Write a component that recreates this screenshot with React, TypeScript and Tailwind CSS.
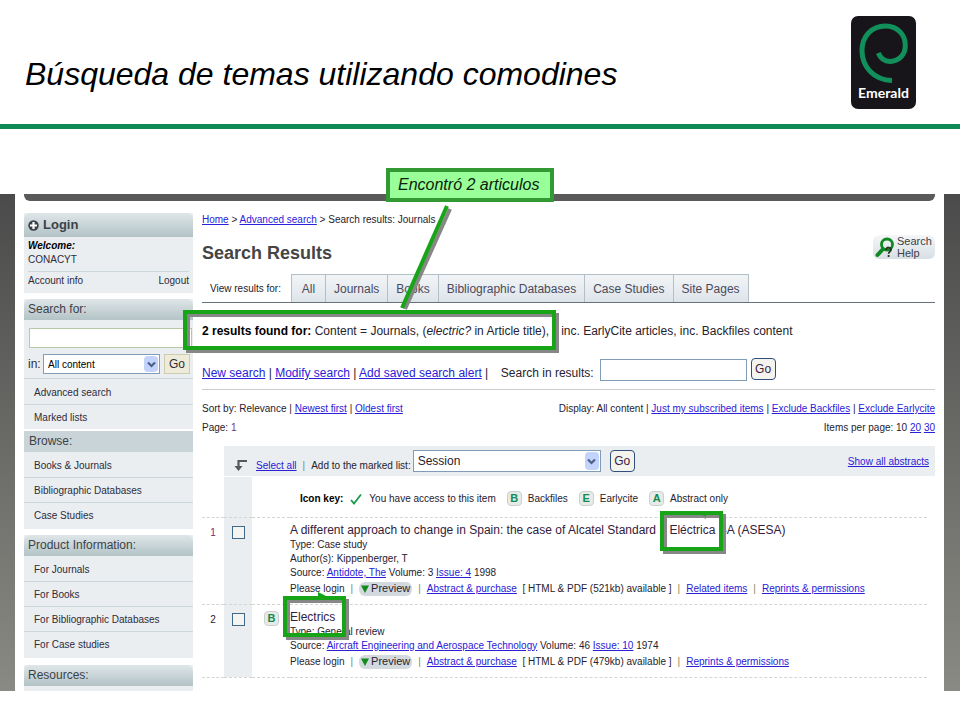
import { ReactNode } from "react";

const Link = ({ children }: { children: ReactNode }) => (
  <a href="#" className="text-[#2a20d8] underline">{children}</a>
);

const Bar = () => <span className="px-1.5 text-[#7c8a5c]">|</span>;

const Chevron = ({ className }: { className: string }) => (
  <span className={`absolute pointer-events-none flex items-center justify-center rounded-sm bg-[#c3d3fb] ${className}`}>
    <svg width="9" height="7" viewBox="0 0 9 7" fill="none">
      <path d="M1 1.5l3.500 3.500 3.500-3.500" stroke="#4a5f8a" strokeWidth="2.200" />
    </svg>
  </span>
);

const Badge = ({ children }: { children: ReactNode }) => (
  <span className="inline-flex h-[15px] w-[15px] items-center justify-center rounded-sm border border-[#cbd0cf] bg-[#e6ebea] text-[11px] leading-none font-bold text-[#148a4c]">
    {children}
  </span>
);

const Logo = () => (
  <svg width="65" height="93" viewBox="0 0 65 93" role="img" aria-label="Emerald">
    <rect x="0" y="0" width="65" height="93" rx="7" fill="#17151a" />
    <path
      d="M27.300 37C30 43.500 35 46 41 45.300C49 44.300 54.300 38 54.300 29.500C54.300 18 46 10 34.500 10C20.500 10 11 20.500 11 34.500C11 51 23 64 41 64.600"
      fill="none"
      stroke="#12905c"
      strokeWidth="5"
    />
    <text x="32.500" y="82" textAnchor="middle" fontFamily="Lato, sans-serif" fontSize="14" fontWeight="700" fill="#fff">Emerald</text>
  </svg>
);

const headStyle = "rounded-t-md bg-linear-to-b from-[#dfe6e8] to-[#b3c3c6] text-[#3c4148]";

const MenuList = ({ items }: { items: string[] }) => (
  <ul>
    {items.map((item, index) => (
      <li key={item} className={`h-[25px] pl-2.5 text-[10px] ${index > 0 ? "border-t border-[#cdd6da] leading-[26px]" : "leading-[28px]"}`}>
        <a href="#">{item}</a>
      </li>
    ))}
  </ul>
);

const Sidebar = () => (
  <aside className="w-[169px] shrink-0 pt-3 text-[#2e2b3a]">
    <section className="mb-1.5 bg-[#eaeef1]">
      <h2 className={`flex h-6 items-center gap-1 px-1 text-[13px] font-bold ${headStyle}`}>
        <svg width="11" height="11" viewBox="0 0 11 11">
          <circle cx="5.500" cy="5.500" r="5.200" fill="#3c4148" />
          <path d="M5.500 2v7M2 5.500h7" stroke="#fff" strokeWidth="2.200" />
        </svg>
        Login
      </h2>
      <div className="h-14 px-1 pt-0.5 text-[10px] leading-[14px]">
        <p className="font-bold italic text-black">Welcome:</p>
        <p>CONACYT</p>
        <div className="mt-1 flex justify-between border-t border-[#cdd6da] pt-0.5">
          <a href="#">Account info</a>
          <a href="#">Logout</a>
        </div>
      </div>
    </section>
    <section className="mb-0.5 bg-[#eaeef1]">
      <h2 className={`h-[21px] px-1 text-[12px] leading-[21px] ${headStyle}`}>Search for:</h2>
      <form className="pt-2 pb-1">
        <input aria-label="Search for" type="text" className="ml-[5px] block h-5 w-[163px] border border-[#b7c9a4] bg-white px-1 text-[10px]" />
        <div className="mt-1.5 flex items-center pl-1 text-[12px]">
          <label htmlFor="scope" className="w-3.5">in:</label>
          <div className="relative ml-px">
            <select id="scope" className="block h-5 w-[117px] appearance-none border border-[#7f9db9] bg-white pl-1 text-[10px] text-black">
              <option>All content</option>
            </select>
            <Chevron className="top-0.5 right-0.5 h-4 w-3.5" />
          </div>
          <button type="button" className="ml-1 h-5 w-[26px] border border-[#cfcdb0] bg-[#eeecd8] text-[12px] leading-none">Go</button>
        </div>
      </form>
      <div className="border-t border-[#cdd6da]">
        <MenuList items={["Advanced search", "Marked lists"]} />
      </div>
    </section>
    <section className="mb-1.5 bg-[#eaeef1] pb-0.5">
      <h2 className="h-[21px] bg-[#c9d4d9] px-[5px] text-[12px] leading-[21px] text-[#3c4148]">Browse:</h2>
      <MenuList items={["Books & Journals", "Bibliographic Databases", "Case Studies"]} />
    </section>
    <section className="mb-[7px] bg-[#eaeef1] pb-0.5">
      <h2 className={`h-[21px] px-1 text-[12px] leading-[21px] ${headStyle}`}>Product Information:</h2>
      <MenuList items={["For Journals", "For Books", "For Bibliographic Databases", "For Case studies"]} />
    </section>
    <section className="bg-[#eaeef1] pb-[5px]">
      <h2 className={`h-[21px] px-1 text-[12px] leading-[21px] ${headStyle}`}>Resources:</h2>
    </section>
  </aside>
);

const tabs = ["All", "Journals", "Books", "Bibliographic Databases", "Case Studies", "Site Pages"];

type Article = {
  id: number;
  backfile: boolean;
  title: ReactNode;
  lines: string[];
  source: string;
  volume: string;
  issue: string;
  year: string;
  size: string;
  links: string[];
};

const articles: Article[] = [
  {
    id: 1,
    backfile: false,
    title: <>A different approach to change in Spain: the case of Alcatel Standard <span className="pl-2.5">Eléctrica</span> SA (ASESA)</>,
    lines: ["Type: Case study", "Author(s): Kippenberger, T"],
    source: "Antidote, The",
    volume: "3",
    issue: "Issue: 4",
    year: "1998",
    size: "521kb",
    links: ["Related items", "Reprints & permissions"],
  },
  {
    id: 2,
    backfile: true,
    title: "Electrics",
    lines: ["Type: General review"],
    source: "Aircraft Engineering and Aerospace Technology",
    volume: "46",
    issue: "Issue: 10",
    year: "1974",
    size: "479kb",
    links: ["Reprints & permissions"],
  },
];

const GoButton = () => (
  <button type="button" className="h-[22px] w-[25px] rounded-sm border border-[#2f4f7c] bg-[#f4f3ee] text-[12px] leading-none text-[#3a2140]">Go</button>
);

const ArticleRow = ({ article }: { article: Article }) => (
  <tr className="border-b border-dashed border-[#d3d7d3] align-top">
    <td className={`w-[22px] pt-2 text-center leading-[14px] ${article.backfile ? "" : "text-[#7a2a7a]"}`}>{article.id}</td>
    <td className="w-7 bg-[#eaeef1] pt-2">
      <input
        type="checkbox"
        aria-label={`Select article ${article.id}`}
        className="mx-auto block h-[13px] w-[13px] appearance-none border border-[#3f6a8a] bg-[#f4f4f1]"
      />
    </td>
    <td className="w-[38px] pt-1.5 pl-3">{article.backfile && <Badge>B</Badge>}</td>
    <td className="pt-1 pb-1.5 leading-[14px]">
      <h3 className="text-[12px] leading-4 text-[#33203c]">{article.title}</h3>
      {article.lines.map((line) => (
        <p key={line}>{line}</p>
      ))}
      <p>
        Source: <Link>{article.source}</Link> Volume: {article.volume} <Link>{article.issue}</Link> {article.year}
      </p>
      <div className="flex h-[18px] items-center whitespace-pre">
        Please login<Bar />
        <button type="button" className="flex h-3.5 items-center gap-0.5 rounded-md bg-[#d3dadf] px-0.5 text-[11px] leading-none">
          <svg width="8" height="8" viewBox="0 0 8 8">
            <path d="M0 0.500h8l-4 7.500z" fill="#148a1c" />
          </svg>
          Preview
        </button>
        <Bar /><Link>Abstract & purchase</Link>
        {`  [ HTML & PDF (${article.size}) available ]`}
        {article.links.map((link) => (
          <span key={link}><Bar /><Link>{link}</Link></span>
        ))}
      </div>
    </td>
  </tr>
);

const Results = () => (
  <main className="min-w-0 flex-1 pt-3 text-[10px] text-[#26222e]">
    <nav className="leading-[14px]">
      <Link>Home</Link> &gt; <Link>Advanced search</Link> &gt; Search results: Journals
    </nav>
    <div className="mt-2 flex items-start justify-between">
      <h1 className="pt-1.5 text-[18px] leading-6 font-bold text-[#454545]">Search Results</h1>
      <a href="#" className="flex h-6 w-[62px] items-center gap-0.5 rounded-md bg-linear-to-b from-[#f4f6f8] to-[#d8dfe4] pl-0.5 text-[11px] text-[#3c4148]">
        <svg width="20" height="21" viewBox="0 0 20 21" fill="none" className="shrink-0">
          <circle cx="12" cy="7.500" r="5.500" stroke="#0f8a22" strokeWidth="2.800" />
          <path d="M8 12l-5.500 6" stroke="#0f8a22" strokeWidth="4" strokeLinecap="round" />
          <path d="M11 13c0-3.500 5-3 5-.3c0 2-2.400 1.800-2.400 4M13.600 18v2" stroke="#223322" strokeWidth="1.800" />
        </svg>
        <span className="flex flex-col leading-3">
          <span>Search</span>
          <span>Help</span>
        </span>
      </a>
    </div>
    <div className="mt-[9px] flex h-[29px] items-stretch border-b border-[#66717c]">
      <span className="w-[89px] pl-2 leading-[30px]">View results for:</span>
      <div className="flex border-l border-[#b3bfc6]">
        {tabs.map((tab) => (
          <button key={tab} type="button" className="min-w-[34px] border-t border-r border-[#b3bfc6] bg-linear-to-b from-[#f2f5f7] to-[#dde4e9] px-2 text-[12px] text-[#4a4a5c]">
            {tab}
          </button>
        ))}
      </div>
    </div>
    <p className="mt-5 text-[12px] leading-4 whitespace-nowrap">
      <b className="text-black">2 results found for:</b> Content = Journals, (<i>electric?</i> in Article title),
      <span className="pl-3">inc. EarlyCite articles, inc. Backfiles content</span>
    </p>
    <form className="mt-[19px] flex h-8 items-start border-b border-[#c9cdd0] text-[12px] whitespace-pre">
      <span className="leading-[30px]">
        <Link>New search</Link> | <Link>Modify search</Link> | <Link>Add saved search alert</Link> |{"  "}
      </span>
      <label htmlFor="within" className="mx-1.5 leading-[30px]">Search in results:</label>
      <input id="within" type="text" className="mr-1 mt-px h-[22px] w-[147px] border border-[#7f9db9] bg-white px-1" />
      <GoButton />
    </form>
    <div className="mt-3 flex justify-between leading-[14px]">
      <p>Sort by: Relevance | <Link>Newest first</Link> | <Link>Oldest first</Link></p>
      <p>
        Display: All content | <Link>Just my subscribed items</Link> | <Link>Exclude Backfiles</Link> | <Link>Exclude Earlycite</Link>
      </p>
    </div>
    <div className="mt-[5px] flex justify-between leading-[14px]">
      <p>Page: <span className="text-[#7a2a7a]">1</span></p>
      <p>Items per page: 10 <Link>20</Link> <Link>30</Link></p>
    </div>
    <div className="mt-[11px] ml-[22px] flex h-[30px] items-center bg-[#eaeef1] pr-1.5 pl-2.5">
      <svg width="14" height="13" viewBox="0 0 14 13" fill="none" className="mt-2 mr-2">
        <path d="M13 2H4.500v6" stroke="#55585c" strokeWidth="2.200" />
        <path d="M0.500 7h8l-4 5z" fill="#55585c" />
      </svg>
      <span className="mt-2"><Link>Select all</Link></span>
      <span className="mt-2"><Bar /></span>
      <label htmlFor="marked" className="mt-2">Add to the marked list:</label>
      <div className="relative ml-0.5">
        <select id="marked" className="block h-[22px] w-[188px] appearance-none border border-[#7f9db9] bg-white pl-1 text-[12px]">
          <option>Session</option>
        </select>
        <Chevron className="top-0.5 right-0.5 h-[18px] w-3.5" />
      </div>
      <span className="ml-[9px]"><GoButton /></span>
      <span className="ml-auto"><Link>Show all abstracts</Link></span>
    </div>
    <div className="mt-px mr-2">
      <table className="w-full border-collapse">
        <tbody>
          <tr className="h-10 border-b border-dashed border-[#d3d7d3]">
            <td></td>
            <td className="bg-[#eaeef1]"></td>
            <td></td>
            <td className="pt-1">
              <div className="flex items-center gap-[7px] pl-2.5">
                <b className="text-black">Icon key:</b>
                <svg width="12" height="12" viewBox="0 0 12 12" fill="none">
                  <path d="M1 7l3 3.500L11 1.500" stroke="#1c9a4c" strokeWidth="1.800" />
                </svg>
                You have access to this item
                <span className="ml-1 flex items-center gap-1.5"><Badge>B</Badge> Backfiles</span>
                <span className="ml-1 flex items-center gap-1.5"><Badge>E</Badge> Earlycite</span>
                <span className="ml-1 flex items-center gap-1.5"><Badge>A</Badge> Abstract only</span>
              </div>
            </td>
          </tr>
          {articles.map((article) => (
            <ArticleRow key={article.id} article={article} />
          ))}
        </tbody>
      </table>
    </div>
  </main>
);

// green frames drawn over the results, with a hard grey shadow on both edges
const Frame = ({ className }: { className: string }) => (
  <div className={`pointer-events-none absolute border-4 border-[#17a517] shadow-[3px_3px_0_#878787,inset_3px_3px_0_#878787] ${className}`} />
);

const App = () => {
  return (
    <div className="min-h-screen bg-white font-['Liberation_Sans',Arial,sans-serif]">
      <header className="flex h-[129px] items-start justify-between border-b-[5px] border-[#0f8a57] pt-4 pr-11 pl-[25px]">
        <p className="pt-10 text-[32px] leading-9 text-black italic">Búsqueda de temas utilizando comodines</p>
        <Logo />
      </header>
      <div className="relative mt-[65px] bg-linear-to-b from-[#4b4b4b] to-[#8a8a84] pr-4 pl-[15px]">
        <div className="bg-white pr-[9px] pl-[9px]">
          <div className="h-[7px] rounded-b-md bg-[#5a5a5a]"></div>
          <div className="flex gap-[9px]">
            <Sidebar />
            <Results />
          </div>
        </div>
        <Frame className="top-[116px] left-[183px] h-10 w-[373px]" />
        <Frame className="top-[317px] left-[660px] h-10 w-[63px]" />
        <Frame className="top-[402px] left-[283px] h-[41px] w-[63px]" />
        <svg width="60" height="110" viewBox="0 0 60 110" className="pointer-events-none absolute top-[8px] left-[395px]">
          <path d="M55 7L10 107" stroke="#878787" strokeWidth="4" />
          <path d="M52 4L7 106" stroke="#17a517" strokeWidth="4" />
        </svg>
        <svg width="14" height="7" viewBox="0 0 14 7" className="pointer-events-none absolute top-[397px] left-[316px]">
          <path d="M2 1L12 6H2z" fill="#17a517" />
        </svg>
        <svg width="14" height="7" viewBox="0 0 14 7" className="pointer-events-none absolute top-[319px] left-[695px]">
          <path d="M3 2h8v4z" fill="#878787" />
          <path d="M1 0h10v3.500z" fill="#17a517" />
        </svg>
        <div className="absolute -top-[26px] left-[386px] border-4 border-[#339933] bg-[#99ff99] pr-[11px] pl-2 text-[16px] leading-[26px] whitespace-nowrap text-[#0b220b] italic">
          Encontró 2 articulos
        </div>
      </div>
    </div>
  );
};

export default App;
